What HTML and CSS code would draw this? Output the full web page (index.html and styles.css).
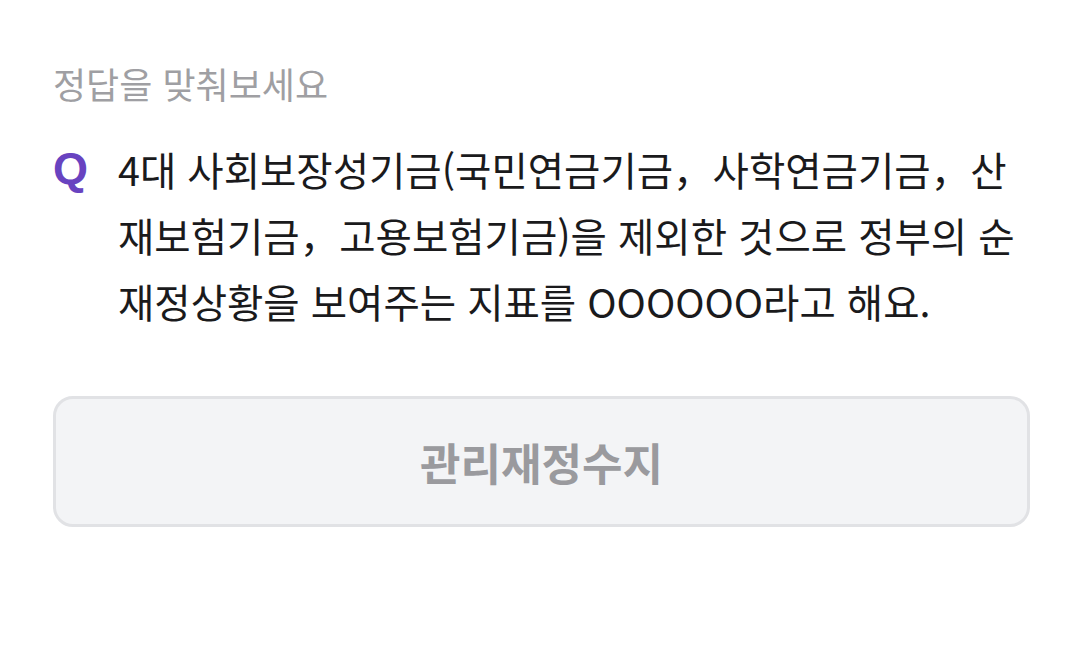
FILE: index.html
```html
<!DOCTYPE html>
<html lang="ko">
<head>
  <meta charset="utf-8">
  <title>정답을 맞춰보세요</title>
  <link rel="stylesheet" href="styles.css">
</head>
<body>
  <div class="quiz">
    <p class="quiz-hint">정답을 맞춰보세요</p>
    <div class="question">
      <span class="question-mark">Q</span>
      <p class="question-text">4대 사회보장성기금(국민연금기금，사학연금기금，산재보험기금，고용보험기금)을 제외한 것으로 정부의 순재정상황을 보여주는 지표를 OOOOOO라고 해요.</p>
    </div>
    <button class="answer" type="button">관리재정수지</button>
  </div>
</body>
</html>
```

FILE: styles.css
```css
body {
  margin: 0;
  background-color: #fff;
  font-family: "Noto Sans CJK KR", "Noto Sans", sans-serif;
}

.quiz {
  padding: 58px 50px 0 53px;
}

.quiz-hint {
  margin: 0;
  color: #9f9fa3;
  font-size: 36px;
  line-height: 50px;
}

.question {
  display: flex;
  margin-top: 28px;
}

.question-mark {
  flex: none;
  width: 65px;
  color: #6843c0;
  font-family: "Liberation Sans", sans-serif;
  font-weight: bold;
  font-size: 45px;
  line-height: 66px;
}

.question-text {
  margin: 0;
  color: #1a1a1c;
  font-size: 39.5px;
  line-height: 66px;
}

.answer {
  display: block;
  width: 977px;
  height: 131px;
  margin-top: 62px;
  padding: 0;
  background-color: #f3f4f6;
  border: 3px solid #e1e2e5;
  border-radius: 20px;
  color: #9a9a9e;
  font-family: inherit;
  font-weight: bold;
  font-size: 44px;
}
```
